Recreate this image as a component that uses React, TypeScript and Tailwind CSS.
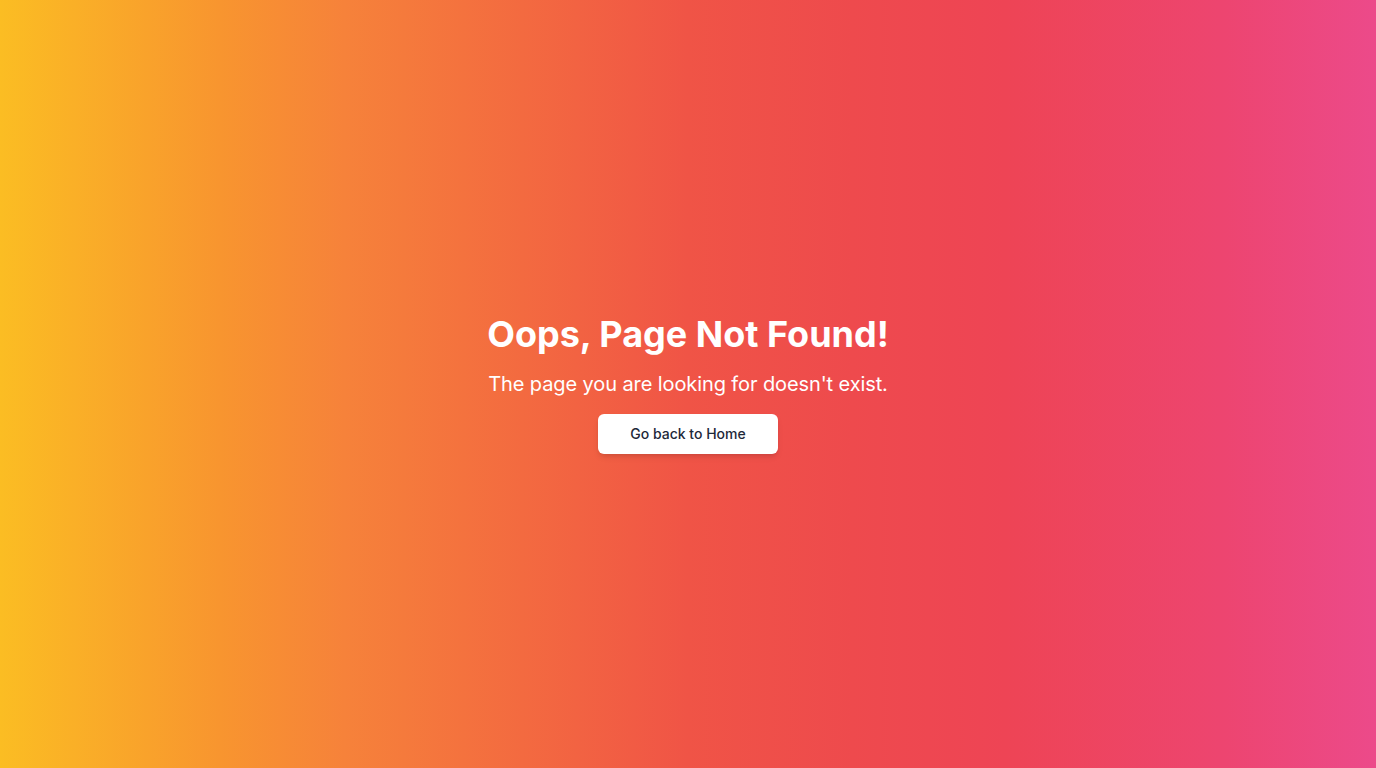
export default function App() {
  return (
    <div className="min-h-screen w-full flex flex-col items-center justify-center bg-[linear-gradient(to_right,#fbbd23_0%,#f8952f_16%,#f6823a_25%,#f36a40_38%,#f05446_50%,#ee4a4d_62%,#ee4455_73%,#ed4570_89%,#ec4a8a_100%)] font-['Inter',sans-serif] text-center">
      <h1 className="text-4xl font-bold text-white mb-4">Oops, Page Not Found!</h1>
      <p className="text-xl text-white mb-4 tracking-[-0.1px]">The page you are looking for doesn't exist.</p>
      <a
        href="#"
        className="inline-block bg-white text-gray-800 text-sm font-medium px-8 py-2.5 rounded-md shadow-md"
      >
        Go back to Home
      </a>
    </div>
  )
}
